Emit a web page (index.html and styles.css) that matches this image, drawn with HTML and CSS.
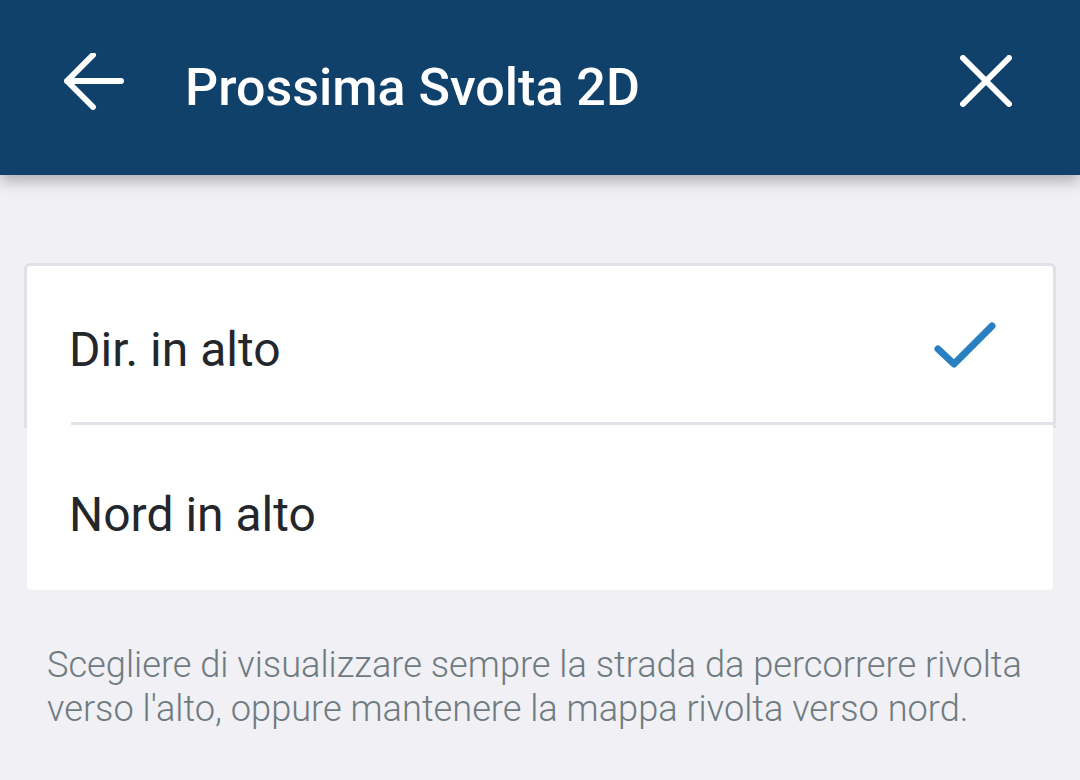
FILE: index.html
```html
<!DOCTYPE html>
<html lang="it">
<head>
    <meta charset="UTF-8">
    <meta name="viewport" content="width=device-width, initial-scale=1.0">
    <title>Prossima Svolta 2D</title>
    <link rel="stylesheet" href="styles.css">
</head>
<body>
    <header class="barra">
        <button class="icona indietro" aria-label="Indietro">
            <svg width="60" height="60" viewBox="0 0 60 60">
                <path d="M57 28H3M29 2L3 28l26 26" fill="none" stroke="#fff" stroke-width="6" stroke-linecap="round" stroke-linejoin="round"/>
            </svg>
        </button>
        <h1 class="titolo">Prossima Svolta 2D</h1>
        <button class="icona chiudi" aria-label="Chiudi">
            <svg width="52" height="52" viewBox="0 0 52 52">
                <path d="M3 3l46 46M49 3L3 49" fill="none" stroke="#fff" stroke-width="6" stroke-linecap="round"/>
            </svg>
        </button>
    </header>

    <main class="contenuto">
        <div class="lista">
            <div class="opzione prima">
                <span>Dir. in alto</span>
                <svg class="spunta" width="64" height="48" viewBox="0 0 64 48">
                    <path d="M5 29l16 15L59 6" fill="none" stroke="#2a7fc0" stroke-width="7" stroke-linecap="round" stroke-linejoin="round"/>
                </svg>
            </div>
            <div class="opzione seconda">
                <span>Nord in alto</span>
            </div>
        </div>
        <p class="nota">Scegliere di visualizzare sempre la strada da percorrere rivolta verso l'alto, oppure mantenere la mappa rivolta verso nord.</p>
    </main>
</body>
</html>
```

FILE: styles.css
```css
body {
    margin: 0;
    font-family: Roboto, "Noto Sans", Arial, sans-serif;
    background-color: #f0f0f5;
}

.barra {
    position: relative;
    z-index: 1;
    height: 175px;
    background-color: #0f416b;
    display: flex;
    align-items: center;
    box-shadow: 0 6px 14px rgba(0, 0, 0, 0.28);
}

.icona {
    background: none;
    border: none;
    padding: 0;
    display: flex;
    cursor: pointer;
}

.indietro {
    margin-left: 64px;
    margin-bottom: 9px;
}

.titolo {
    margin: 0 0 0 61px;
    color: #fff;
    font-size: 52px;
    font-weight: 500;
    flex: 1;
}

.chiudi {
    margin-right: 68px;
    margin-bottom: 13px;
}

.contenuto {
    padding: 88px 24px 0;
}

.lista {
    display: flex;
    flex-direction: column;
}

.opzione {
    display: flex;
    align-items: center;
    justify-content: space-between;
    background-color: #fff;
    color: #23272b;
    font-size: 48px;
    padding-left: 42px;
    box-sizing: border-box;
}

.opzione span {
    margin-top: 10px;
}

.prima {
    position: relative;
    height: 165px;
    border: 3px solid #e1e1e8;
    border-bottom: none;
    border-radius: 6px 6px 0 0;
    padding-bottom: 6px;
}

.prima::after {
    content: "";
    position: absolute;
    left: 44px;
    right: 0;
    bottom: 3px;
    height: 3px;
    background-color: #e1e1e8;
}

.spunta {
    margin-right: 56px;
    margin-top: 0;
}

.seconda {
    height: 162px;
    margin: 0 3px;
    border-radius: 0 0 4px 4px;
    padding-left: 42px;
}

.nota {
    margin: 53px 0 0 23px;
    color: #6f7b80;
    font-size: 36.2px;
    font-weight: 300;
    line-height: 44px;
}
```
